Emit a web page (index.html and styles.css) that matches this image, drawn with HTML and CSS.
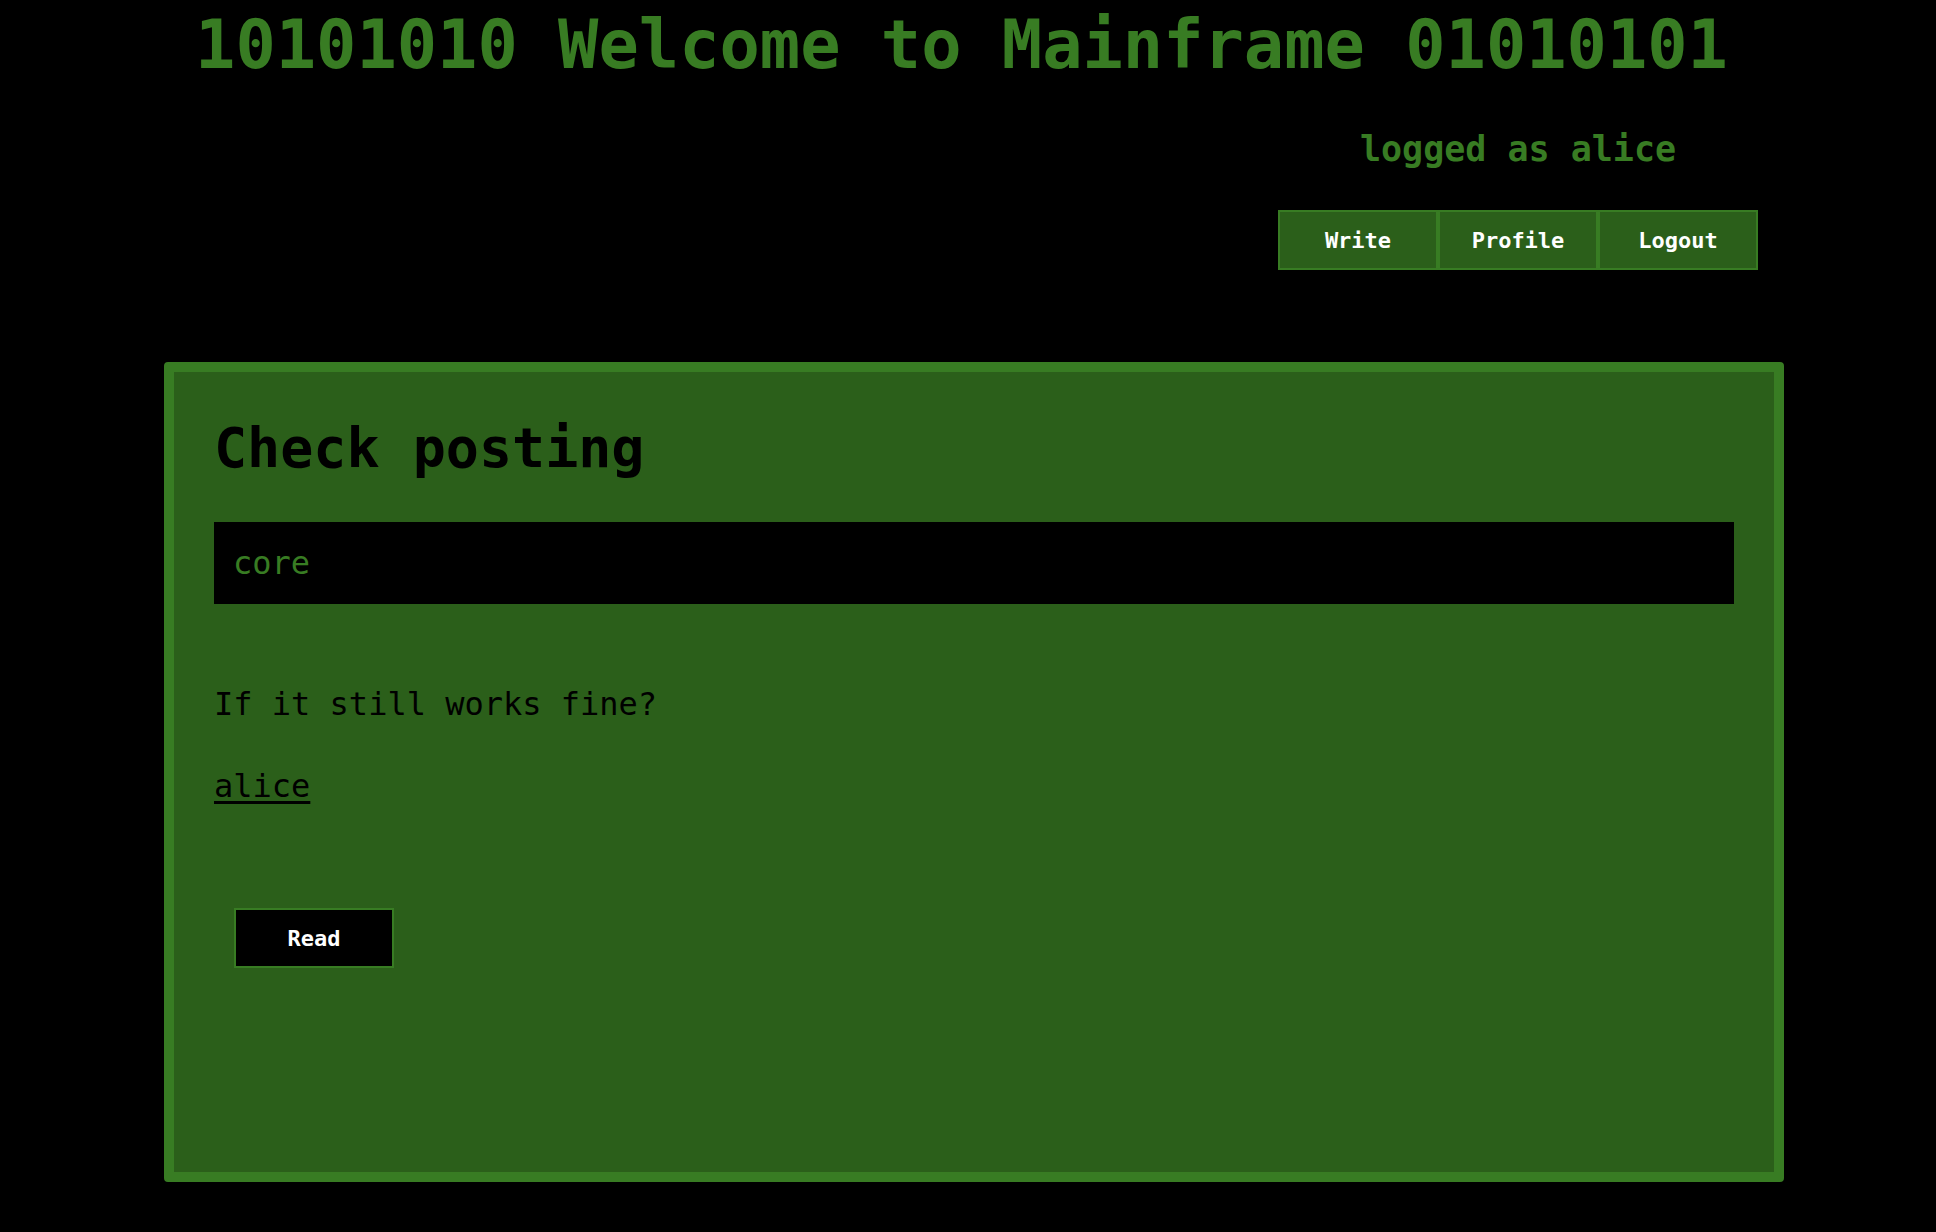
FILE: index.html
```html
<!DOCTYPE html>
<html lang="en">
<head>
<meta charset="utf-8">
<title>Mainframe</title>
<link rel="stylesheet" href="styles.css">
</head>
<body>
<header class="site-header">
  <h1 class="site-title">10101010 Welcome to Mainframe 01010101</h1>
  <nav class="user-nav">
    <div class="logged">logged as alice</div>
    <div class="nav-buttons">
      <a class="btn" href="#">Write</a>
      <a class="btn" href="#">Profile</a>
      <a class="btn" href="#">Logout</a>
    </div>
  </nav>
</header>
<main class="panel">
  <h2 class="post-title">Check posting</h2>
  <div class="category">core</div>
  <p class="post-body">If it still works fine?</p>
  <p class="post-author"><a href="#">alice</a></p>
  <a class="btn btn-dark" href="#">Read</a>
</main>
</body>
</html>
```
FILE: styles.css
```css
* { box-sizing: border-box; }

body {
  margin: 0;
  background: #000;
  font-family: "DejaVu Sans Mono", "Liberation Mono", monospace;
  color: #000;
}

.site-header {
  display: flex;
  flex-direction: column;
}

.site-title {
  margin: 0;
  padding: 6px 13px 0 0;
  font-size: 67px;
  font-weight: bold;
  line-height: 78px;
  text-align: center;
  color: #387c23;
}

.user-nav {
  align-self: flex-end;
  margin: 45px 178px 0 0;
  width: 480px;
  display: flex;
  flex-direction: column;
  align-items: center;
}

.logged {
  font-size: 35px;
  font-weight: bold;
  color: #387c23;
  line-height: 41px;
}

.nav-buttons {
  display: flex;
  margin-top: 40px;
}

.btn {
  display: flex;
  align-items: center;
  justify-content: center;
  width: 160px;
  height: 60px;
  border: 2px solid #387c23;
  background: #2b5f1a;
  color: #fff;
  font-size: 22px;
  font-weight: bold;
  text-decoration: none;
}

.panel {
  display: flex;
  flex-direction: column;
  align-items: flex-start;
  margin: 92px 0 0 164px;
  width: 1620px;
  height: 820px;
  padding: 44px 40px;
  border: 10px solid #387c23;
  border-radius: 4px;
  background: #2b5f1a;
}

.post-title {
  margin: 0;
  font-size: 55px;
  font-weight: bold;
  line-height: 64px;
}

.category {
  align-self: stretch;
  margin-top: 42px;
  height: 82px;
  padding: 0 19px;
  display: flex;
  align-items: center;
  background: #000;
  color: #387c23;
  font-size: 32px;
}

.post-body {
  margin: 82px 0 0;
  font-size: 32px;
  line-height: 37px;
}

.post-author {
  margin: 45px 0 0;
  font-size: 32px;
  line-height: 37px;
}

.post-author a {
  color: #000;
  text-decoration: underline;
  text-underline-offset: 4px;
}

.btn-dark {
  margin: 103px 0 0 20px;
  background: #000;
}
```
